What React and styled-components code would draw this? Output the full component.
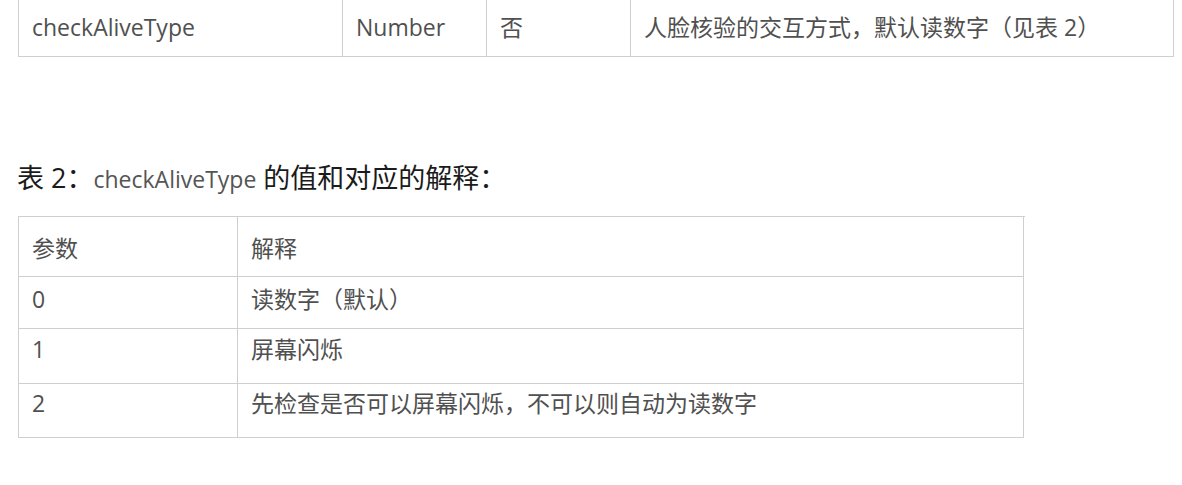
import React from "react";
import styled, { createGlobalStyle } from "styled-components";

const GlobalStyle = createGlobalStyle`
  html, body {
    margin: 0;
    padding: 0;
    background: #fff;
  }
  body {
    font-family: "Open Sans", "Noto Sans CJK SC", sans-serif;
    color: #555;
  }
`;

const Page = styled.div`
  width: 1182px;
  height: 485px;
  overflow: hidden;
  padding-left: 18px;
  box-sizing: border-box;
`;

const Table = styled.div`
  display: flex;
  flex-direction: column;
  width: ${p => p.width}px;
  border-left: 1px solid #cfcfcf;
  border-top: 1px solid #cfcfcf;
  margin-top: ${p => p.offset || 0}px;
`;

const Row = styled.div`
  display: grid;
  grid-template-columns: ${p => p.cols};
  height: ${p => p.h}px;
`;

const Cell = styled.div`
  box-sizing: border-box;
  border-right: 1px solid #cfcfcf;
  border-bottom: 1px solid #cfcfcf;
  padding: ${p => p.pt || 0}px 12px 0 13px;
  font-size: 23px;
  line-height: 33px;
  color: #505050;
  white-space: nowrap;
  display: flex;
  align-items: ${p => (p.center ? "center" : "flex-start")};
`;

const Heading = styled.h3`
  margin: 101px 0 17px -1px;
  font-weight: 400;
  font-size: 27px;
  line-height: 40px;
  color: #1b1b1b;
  font-family: "Open Sans", "Noto Sans CJK SC", sans-serif;
`;

const Code = styled.span`
  font-size: 23px;
  color: #555;
`;

const topCols = "324px 144px 144px 543px";
const typeCols = "219px 786px";

const typeRows = [
  { h: 60, pt: 15, key: "参数", value: "解释" },
  { h: 52, pt: 6, key: "0", value: "读数字（默认）" },
  { h: 55, pt: 4, key: "1", value: "屏幕闪烁" },
  { h: 54, pt: 3, key: "2", value: "先检查是否可以屏幕闪烁，不可以则自动为读数字" },
];

export default function App() {
  return (
    <Page>
      <GlobalStyle />
      <Table width={1156} offset={-3}>
        <Row cols={topCols} h={59}>
          <Cell center>checkAliveType</Cell>
          <Cell center>Number</Cell>
          <Cell center>否</Cell>
          <Cell center>人脸核验的交互方式，默认读数字（见表 2）</Cell>
        </Row>
      </Table>

      <Heading>
        表 2：<Code>checkAliveType</Code> 的值和对应的解释：
      </Heading>

      <Table width={1006}>
        {typeRows.map(r => (
          <Row key={r.key} cols={typeCols} h={r.h}>
            <Cell pt={r.pt}>{r.key}</Cell>
            <Cell pt={r.pt}>{r.value}</Cell>
          </Row>
        ))}
      </Table>
    </Page>
  );
}
